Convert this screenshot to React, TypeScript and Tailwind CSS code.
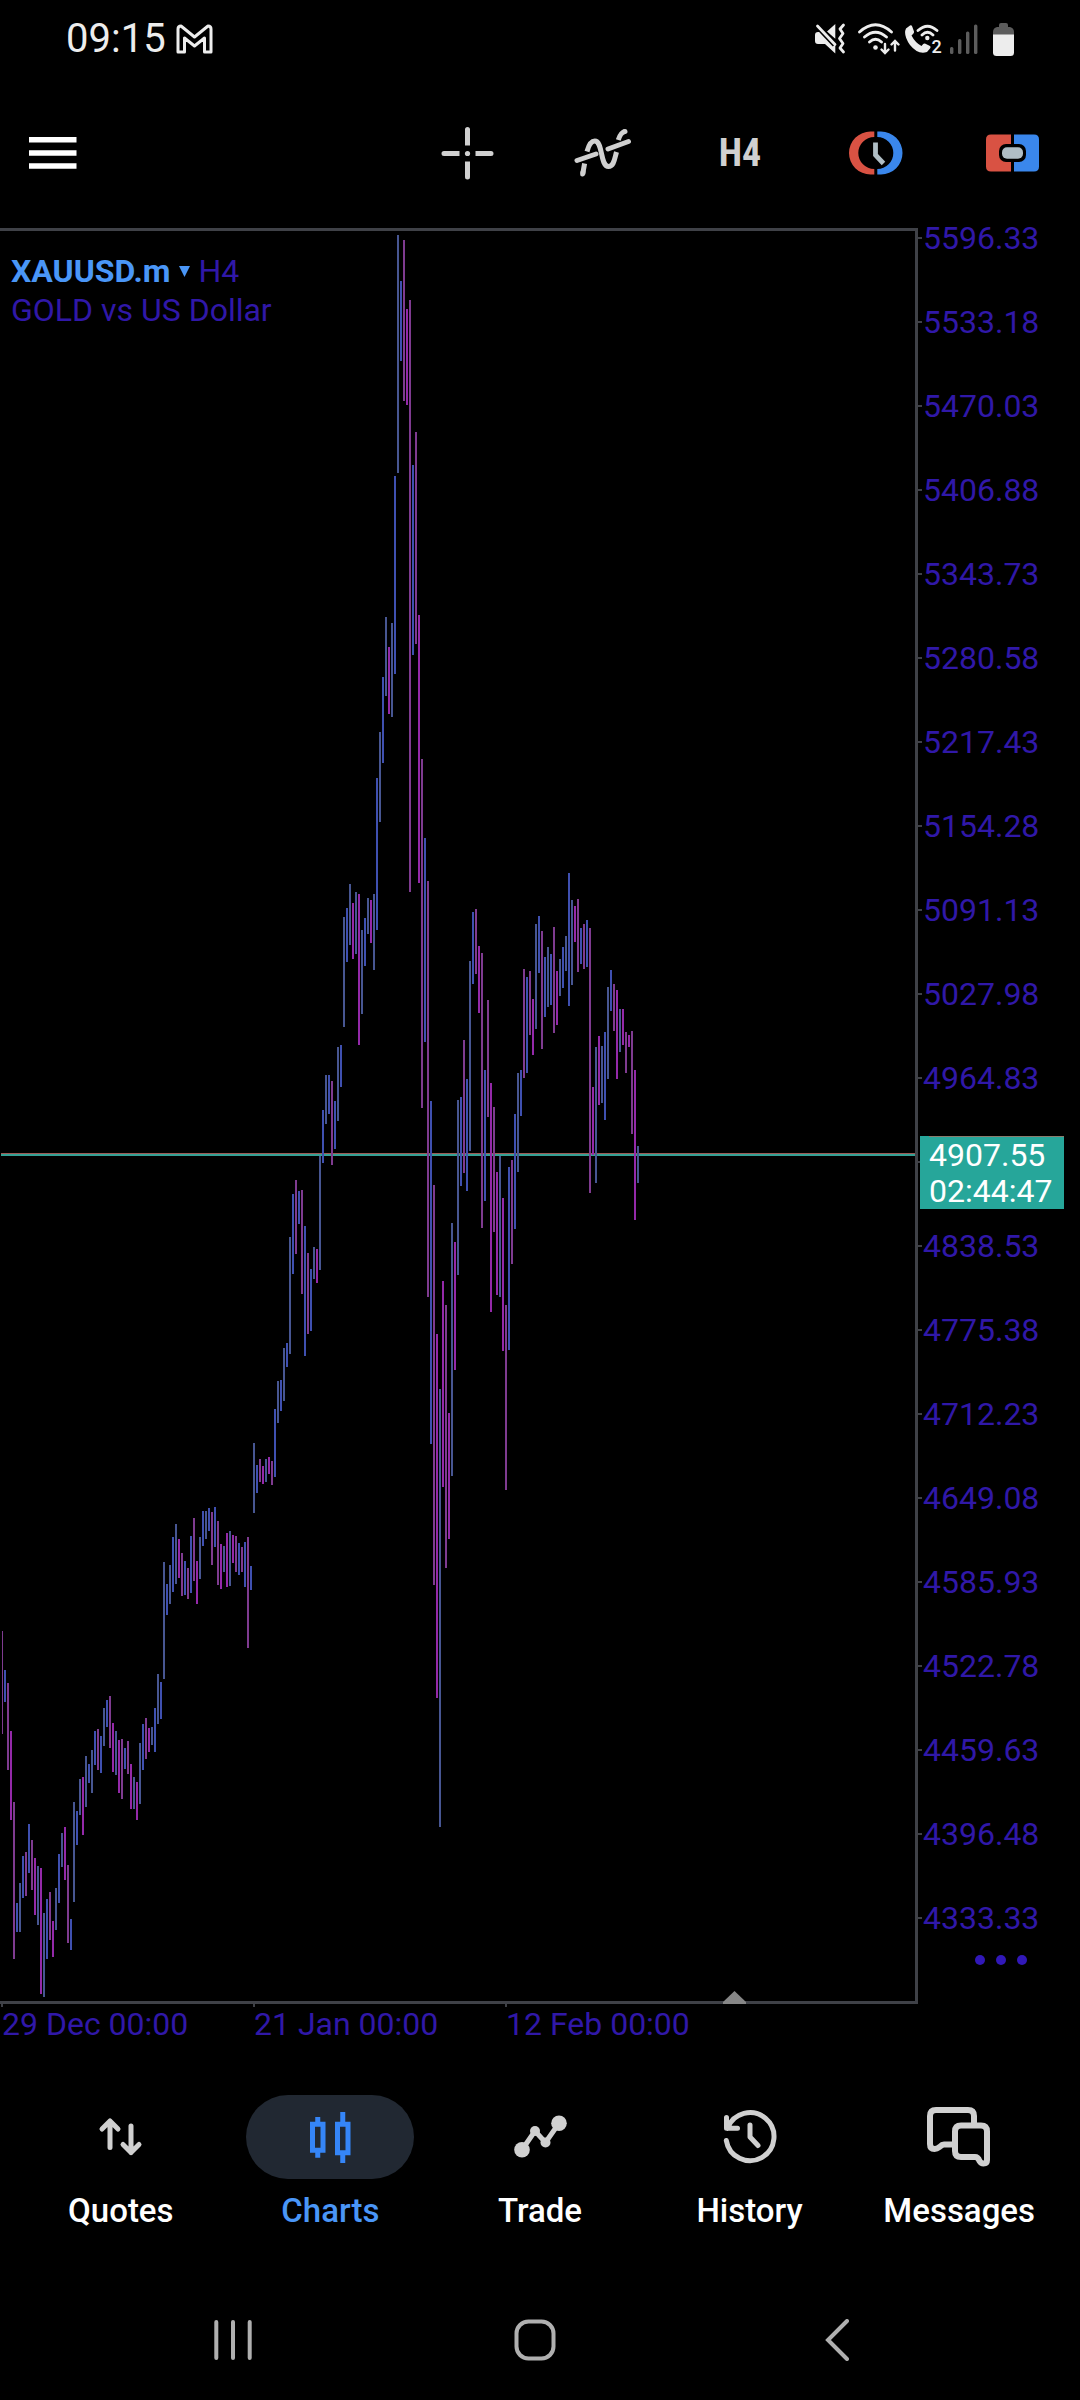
import { useState, type ReactNode } from "react";
import clsx from "clsx";

type Bar = [up: 0 | 1, high: number, low: number];

// one entry per H4 bar, oldest first
const bars: Bar[] = [
    [0, 1631, 1734], [1, 1670, 1702], [0, 1683, 1770], [0, 1731, 1820], [0, 1802, 1959], [1, 1903, 1932],
    [1, 1883, 1932], [1, 1856, 1898], [0, 1852, 1896], [1, 1824, 1873], [0, 1840, 1890], [0, 1858, 1915],
    [1, 1866, 1925], [0, 1868, 1994], [1, 1913, 1997], [1, 1899, 1959], [0, 1892, 1940], [0, 1921, 1957],
    [1, 1888, 1930], [1, 1854, 1903], [1, 1833, 1867], [0, 1827, 1880], [0, 1865, 1943], [1, 1919, 1950],
    [1, 1802, 1902], [1, 1811, 1845], [1, 1779, 1815], [0, 1777, 1835], [1, 1756, 1807], [1, 1764, 1783],
    [1, 1750, 1793], [1, 1731, 1765], [0, 1729, 1770], [1, 1736, 1773], [1, 1708, 1746], [1, 1700, 1727],
    [0, 1696, 1748], [0, 1723, 1772], [1, 1731, 1775], [0, 1740, 1793], [0, 1739, 1799], [1, 1748, 1769],
    [0, 1741, 1774], [0, 1764, 1809], [1, 1777, 1809], [0, 1782, 1820], [1, 1743, 1804], [1, 1724, 1770],
    [0, 1718, 1759], [0, 1728, 1752], [1, 1727, 1745], [1, 1708, 1752], [1, 1674, 1724], [1, 1682, 1719],
    [1, 1562, 1679], [1, 1584, 1615], [1, 1565, 1604], [1, 1537, 1592], [1, 1524, 1584], [0, 1539, 1578],
    [0, 1553, 1596], [1, 1561, 1595], [0, 1568, 1599], [1, 1536, 1593], [0, 1518, 1581], [0, 1561, 1604],
    [1, 1537, 1579], [1, 1511, 1546], [1, 1511, 1539], [1, 1508, 1531], [0, 1512, 1565], [1, 1507, 1547],
    [0, 1521, 1585], [0, 1544, 1589], [1, 1546, 1572], [0, 1533, 1587], [1, 1531, 1586], [0, 1535, 1563],
    [0, 1536, 1572], [1, 1543, 1575], [0, 1547, 1572], [1, 1542, 1587], [0, 1537, 1648], [1, 1566, 1590],
    [1, 1443, 1513], [1, 1465, 1493], [0, 1459, 1482], [0, 1466, 1484], [1, 1459, 1482], [0, 1457, 1474],
    [0, 1461, 1485], [1, 1409, 1477], [1, 1381, 1423], [1, 1380, 1411], [1, 1348, 1401], [1, 1343, 1367],
    [1, 1237, 1354], [1, 1194, 1274], [0, 1180, 1254], [1, 1191, 1224], [0, 1190, 1294], [1, 1226, 1356],
    [0, 1253, 1334], [1, 1269, 1331], [1, 1247, 1279], [0, 1249, 1283], [1, 1156, 1270], [1, 1110, 1163],
    [1, 1075, 1124], [1, 1075, 1114], [0, 1081, 1165], [1, 1101, 1149], [1, 1047, 1121], [1, 1045, 1087],
    [1, 917, 1027], [1, 908, 962], [1, 884, 945], [0, 903, 959], [1, 892, 954], [0, 894, 1045],
    [1, 930, 1014], [1, 918, 966], [1, 898, 934], [0, 900, 943], [1, 894, 970], [1, 778, 930],
    [1, 732, 822], [1, 677, 763], [1, 617, 696], [0, 647, 714], [1, 623, 717], [1, 476, 674],
    [1, 235, 473], [1, 281, 361], [0, 240, 401], [0, 309, 405], [0, 300, 892], [1, 465, 655],
    [0, 432, 644], [0, 615, 883], [0, 759, 1108], [1, 838, 1042], [0, 881, 1297], [1, 1101, 1444],
    [0, 1185, 1585], [0, 1334, 1698], [1, 1389, 1827], [0, 1281, 1487], [0, 1305, 1568], [0, 1413, 1539],
    [1, 1223, 1476], [0, 1242, 1370], [1, 1100, 1275], [1, 1097, 1186], [0, 1040, 1173], [1, 1079, 1191],
    [1, 961, 1151], [1, 912, 984], [0, 909, 974], [0, 946, 1013], [0, 953, 1228], [1, 1070, 1201],
    [0, 1000, 1117], [0, 1083, 1312], [0, 1107, 1232], [0, 1172, 1295], [1, 1156, 1297], [0, 1198, 1351],
    [0, 1305, 1490], [1, 1167, 1350], [0, 1160, 1264], [1, 1114, 1229], [1, 1073, 1172], [1, 1070, 1116],
    [0, 969, 1078], [1, 977, 1073], [0, 971, 1035], [0, 999, 1055], [1, 924, 1029], [1, 916, 973],
    [0, 931, 1049], [1, 957, 1017], [1, 947, 1007], [1, 954, 1005], [0, 927, 1033], [0, 971, 1025],
    [1, 959, 996], [1, 947, 988], [1, 936, 971], [1, 873, 1006], [1, 900, 985], [0, 906, 942],
    [0, 899, 972], [1, 928, 964], [0, 924, 969], [1, 920, 967], [0, 928, 1193], [0, 1087, 1155],
    [1, 1047, 1183], [0, 1036, 1105], [1, 1046, 1103], [1, 1032, 1120], [1, 987, 1079], [1, 970, 1011],
    [0, 984, 1031], [0, 990, 1079], [1, 1009, 1052], [0, 1009, 1045], [0, 1032, 1073], [0, 1035, 1047],
    [0, 1031, 1134], [0, 1070, 1220], [1, 1146, 1183],
];

const currentPrice = 4907.55;
const prices = Array.from({ length: 21 }, (_, i) => 5596.33 - i * 63.15);
const dates = ["29 Dec 00:00", "21 Jan 00:00", "12 Feb 00:00"];

const barColor = (up: number, i: number) => {
    if (up) return i % 2 ? "#3f50b0" : "#475692";
    return i % 2 ? "#9429a9" : "#7f3b90";
};

const StatusBar = () => (
    <div className="flex h-[78px] items-center justify-between px-[66px] text-[#ededed]">
        <div className="flex items-center gap-[10px]">
            <span className="text-[40px] leading-[48px]">09:15</span>
            <svg width="37" height="30" viewBox="0 0 37 30" fill="none" stroke="currentColor" strokeWidth="3" strokeLinejoin="round">
                <path d="M2 5Q2 2 5 2L18.500 13L32 2Q35 2 35 5V28H28.500V14L18.500 22L8.500 14V28H2Z" />
            </svg>
        </div>
        <div className="flex items-center">
            <svg width="43" height="33" viewBox="0 0 43 33" fill="currentColor">
                <path d="M12 8.500L20.300 1V15.800ZM0 12Q0 9 3 9H7L20.300 22.500V30.500L10 21H3Q0 21 0 18Z" />
                <path d="M2.500 3L20 21.500" stroke="#000" strokeWidth="6" />
                <path d="M2.500 3L20 21.500M28.500 2L25 6L28 10.500L24.500 15.500L28 20.500L25 25L28.500 29" fill="none" stroke="currentColor" strokeWidth="2.800" strokeLinecap="round" strokeLinejoin="round" />
            </svg>
            <svg width="46" height="33" viewBox="0 0 46 33" fill="none" stroke="currentColor" strokeWidth="2.800" strokeLinecap="round">
                <path d="M1.500 9Q17.500 -5.500 33.500 9M6.500 14Q17.500 4.500 28.500 14M11.500 19Q17.500 13.500 23.500 19" />
                <circle cx="17.500" cy="24.500" r="2.300" fill="currentColor" stroke="none" />
                <path d="M27 21V29.500M23.500 26.500L27 30L30.500 26.500M37 27.500V19M33.500 21.500L37 18L40.500 21.500" strokeWidth="2.400" />
            </svg>
            <svg width="46" height="33" viewBox="0 0 46 33" fill="currentColor">
                <path d="M2 5.500L6 2.500Q7.500 1.800 8.200 3.500L10 8.500Q10.300 9.800 9 11L7.500 12.500Q11 19.500 17.500 23L19 21.200Q20 20.300 21.500 20.800L26 23Q27 24 26 25.500L23 29Q14 32 6 22Q-1 12 2 5.500Z" />
                <path d="M14 7.500Q23.500 -1 33 7.500M18 12Q23.500 6.500 29 12" fill="none" stroke="currentColor" strokeWidth="2.800" strokeLinecap="round" />
                <circle cx="23.300" cy="15" r="2.200" />
                <text x="27.500" y="30" fontSize="18" fontWeight="500">2</text>
            </svg>
            <svg width="43" height="33" viewBox="0 0 43 33" fill="#5c5c5c">
                <rect x="0" y="24" width="3.400" height="7" rx="1.500" />
                <rect x="8" y="16" width="3.400" height="15" rx="1.500" />
                <rect x="16" y="8.500" width="3.400" height="22.500" rx="1.500" />
                <rect x="24" y="1.500" width="3.400" height="29.500" rx="1.500" />
            </svg>
            <svg width="21" height="33" viewBox="0 0 21 33">
                <path d="M6 4V2Q6 0 8 0H13Q15 0 15 2V4H17Q21 5 21 9V12H0V9Q0 5 4 4Z" fill="#5c5c5c" />
                <path d="M0 11.500H21V29.500Q21 33 17.500 33H3.500Q0 33 0 29.500Z" fill="currentColor" />
            </svg>
        </div>
    </div>
);

const ToolButton = ({ label, children }: { label: string; children: ReactNode }) => (
    <button aria-label={label} className="flex h-full w-[136px] items-center justify-center text-[#d0d0d0]">
        {children}
    </button>
);

const Toolbar = () => (
    <header className="flex h-[150px] items-center">
        <button aria-label="Menu" className="flex h-full items-center px-[29px] text-white">
            <svg width="48" height="32" viewBox="0 0 48 32" fill="currentColor">
                <path d="M0 0h47.500v5.500H0zM0 13.200h47.500v5.500H0zM0 26.200h47.500v5.500H0z" />
            </svg>
        </button>
        <div className="ml-auto flex h-full">
            <ToolButton label="Crosshair">
                <svg width="54" height="54" viewBox="0 0 54 54" fill="none" stroke="currentColor" strokeWidth="5">
                    <path d="M3 27.500H18.500M34.500 27.500H50M26.500 3.500V19.500M26.500 35.500V51" strokeLinecap="butt" />
                    <path d="M3 27.500H5M48 27.500H50M26.500 3.500V5M26.500 50V51" strokeLinecap="round" />
                    <circle cx="26.500" cy="27.500" r="2.600" fill="currentColor" stroke="none" />
                </svg>
            </ToolButton>
            <ToolButton label="Indicators">
                <svg width="60" height="52" viewBox="0 0 60 52" fill="none" stroke="currentColor" strokeWidth="5">
                    <path d="M3 33.500L22 27M34 22L54.500 14.500" strokeLinecap="round" />
                    <path d="M8.700 47L9 45M51 4.500L50.500 4.600" strokeLinecap="round" />
                    <path d="M8.700 47L10.600 36.500M44.300 13Q46.500 5.500 51 4.400" />
                    <path d="M13 24.500C15 17 17.500 14 20.800 14C29 14 26 39.500 34.500 39.500C40 39.500 40.500 32 42.500 25" />
                </svg>
            </ToolButton>
            <button className="h-full w-[136px] font-['Roboto_Condensed','Liberation_Sans_Narrow',sans-serif] text-[38px] font-bold text-[#d0d0d0]">
                H4
            </button>
            <ToolButton label="Trading sessions">
                <svg width="54" height="44" viewBox="0 0 54 44">
                    <path d="M25.300 .500H21.500A21.500 21.500 0 0 0 21.500 43.500H25.300V38A16 16 0 0 1 25.300 6Z" fill="#d95243" />
                    <path d="M28.300 .500H32A21.500 21.500 0 0 1 32 43.500H28.300V38A16 16 0 0 0 28.300 6Z" fill="#3a87ec" />
                    <path d="M26.500 11.500V24L34.500 32.500" fill="none" stroke="#b0bec5" strokeWidth="4.800" />
                </svg>
            </ToolButton>
            <ToolButton label="One click trading">
                <svg width="53" height="38" viewBox="0 0 53 38">
                    <path d="M25 .500H5Q0 .500 0 5.500V32.500Q0 37.500 5 37.500H25Z" fill="#d95243" />
                    <path d="M28 .500H48Q53 .500 53 5.500V32.500Q53 37.500 48 37.500H28Z" fill="#3a87ec" />
                    <rect x="13" y="10" width="27" height="18" rx="7" />
                    <rect x="16" y="13.300" width="21" height="11.500" rx="5" fill="#b0bec5" />
                </svg>
            </ToolButton>
        </div>
    </header>
);

const Plot = () => (
    <div className="relative flex flex-1 border-t-[3px] border-r-[3px] border-b-[3px] border-[#3f4147]">
        <svg className="w-full flex-1" viewBox="0 231 915 1770" preserveAspectRatio="none" shapeRendering="crispEdges">
            <rect x="1" y="1153" width="914" height="1" fill="#9c5a55" />
            <rect x="1" y="1154" width="914" height="2" fill="#35a094" />
            {bars.map(([up, high, low], i) => (
                <rect key={i} x={i ? 3 * i + 1 : 2} y={high} width={i ? 2 : 1} height={low - high} fill={barColor(up, i)} />
            ))}
        </svg>
        <div className="absolute top-[21px] left-[11px] text-[32px] leading-[39px]">
            <div className="flex items-center gap-2">
                <button className="flex items-center gap-[9px] font-bold text-[#4a96f7]">
                    XAUUSD.m
                    <svg width="11" height="11" viewBox="0 0 11 11" fill="currentColor"><path d="M0 0H11L5.500 11Z" /></svg>
                </button>
                <span>H4</span>
            </div>
            <div>GOLD vs US Dollar</div>
        </div>
        <svg className="absolute right-[169px] -bottom-[3px]" width="23" height="13" viewBox="0 0 23 13" fill="#868686">
            <path d="M11.500 0L23 11V13H0V11Z" />
        </svg>
    </div>
);

const PriceAxis = () => (
    <div className="relative w-[162px]">
        <ul className="flex flex-col gap-16 text-[32px] leading-5">
            {prices.map((price) => (
                <li key={price} className="flex h-5 items-center gap-px">
                    <span className="h-[2px] w-1 bg-[#3f4147]" />
                    {/* the current price tag takes the place of the nearest label */}
                    {Math.abs(price - currentPrice) > 20 && price.toFixed(2)}
                </li>
            ))}
        </ul>
        <div className="absolute top-[908px] left-[2px] w-36 bg-[#26a69a] pl-[9px] text-[32px] leading-9 text-white">
            <div className="h-px w-[135px] bg-[#8a7d6e]" />
            <div>{currentPrice}</div>
            <div>02:44:47</div>
        </div>
        <button aria-label="More" className="mt-[27px] ml-[57px] flex gap-[11px]">
            <span className="size-[10px] rounded-full bg-[#3118b8]" />
            <span className="size-[10px] rounded-full bg-[#3118b8]" />
            <span className="size-[10px] rounded-full bg-[#3118b8]" />
        </button>
    </div>
);

const TimeAxis = () => (
    <div className="flex h-[46px] pl-px text-[32px] leading-[34px]">
        {dates.map((date) => (
            <div key={date} className="w-[252px]">
                <div className="h-[3px] w-[2px] bg-[#3f4147]" />
                <div className="pl-px">{date}</div>
            </div>
        ))}
    </div>
);

const tabs = [
    {
        name: "Quotes",
        icon: (
            <svg width="48" height="48" viewBox="0 0 48 48" fill="none" stroke="currentColor" strokeWidth="5" strokeLinecap="round" strokeLinejoin="round">
                <path d="M13 8V34.500M5 16L13 8L21 16M34 13V39.500M26 31.500L34 39.500L42 31.500" />
            </svg>
        ),
    },
    {
        name: "Charts",
        icon: (
            <svg width="48" height="56" viewBox="0 0 48 56" fill="none" stroke="#3585f7" strokeWidth="5">
                <path d="M6.500 15.300h10.500v26H6.500zM31.500 15.300h10.500v28.500H31.500zM11.750 8v6M11.750 43v5.700M36.750 3v11M36.750 45v9" />
            </svg>
        ),
    },
    {
        name: "Trade",
        icon: (
            <svg width="56" height="56" viewBox="0 0 56 56" fill="currentColor">
                <path d="M10 40.700L23 22L33.500 33.500L47 14.300" fill="none" stroke="currentColor" strokeWidth="5" />
                <circle cx="10" cy="40.700" r="7.800" />
                <circle cx="23" cy="22" r="5" />
                <circle cx="33.500" cy="33.500" r="5" />
                <circle cx="47" cy="14.300" r="7.800" />
            </svg>
        ),
    },
    {
        name: "History",
        icon: (
            <svg width="56" height="56" viewBox="0 0 56 56" fill="none" stroke="currentColor" strokeWidth="5" strokeLinecap="round" strokeLinejoin="round">
                <path d="M4.300 31.500A24 24 0 1 0 5.500 19.300M4.500 8.500V19.300H15.500M28 16V28L36 36.500" />
            </svg>
        ),
    },
    {
        name: "Messages",
        icon: (
            <svg width="64" height="64" viewBox="0 0 64 64" fill="none" stroke="currentColor" strokeWidth="6" strokeLinejoin="round">
                <path d="M27 39.500H17Q15 39.500 12.500 42Q10 44 7.500 44Q3 44 3 39V11Q3 5 9 5H41Q47 5 47 11V20" />
                <path d="M34 20.500H54Q60 20.500 60 26.500V55Q60 58.500 56.500 58.500Q54 58.500 52.500 56Q51 52 48 52H34Q28 52 28 46V26.500Q28 20.500 34 20.500Z" />
            </svg>
        ),
    },
];

const TabBar = () => {
    const [active, setActive] = useState("Charts");

    return (
        <nav className="grid grid-cols-5 px-4 pt-[45px] pb-[49px]">
            {tabs.map(({ name, icon }) => (
                <button key={name} onClick={() => setActive(name)} className="flex flex-col items-center gap-3">
                    <span
                        className={clsx(
                            "flex h-[84px] w-[168px] items-center justify-center rounded-full text-[#d0d0d0]",
                            active === name && "bg-[#212832]"
                        )}
                    >
                        {icon}
                    </span>
                    <span className={clsx("text-[33px] leading-10 font-medium", active === name ? "text-[#4a96f7]" : "text-white")}>
                        {name}
                    </span>
                </button>
            ))}
        </nav>
    );
};

const SystemNav = () => (
    <div className="grid h-[120px] grid-cols-3 pr-[92px] pl-[82px] text-[#b0b0b0]">
        <button aria-label="Recents" className="flex items-center justify-center">
            <svg width="38" height="42" viewBox="0 0 38 42" fill="none" stroke="currentColor" strokeWidth="4" strokeLinecap="round">
                <path d="M2.300 3V39M19 3V39M35.700 3V39" />
            </svg>
        </button>
        <button aria-label="Home" className="flex items-center justify-center">
            <svg width="42" height="42" viewBox="0 0 42 42" fill="none" stroke="currentColor" strokeWidth="4">
                <rect x="2.500" y="2.500" width="37" height="37" rx="12" />
            </svg>
        </button>
        <button aria-label="Back" className="flex items-center justify-center">
            <svg width="24" height="42" viewBox="0 0 24 42" fill="none" stroke="currentColor" strokeWidth="4" strokeLinecap="round">
                <path d="M22 2L3 21L22 40" />
            </svg>
        </button>
    </div>
);

const App = () => {
    return (
        <div className="flex min-h-screen flex-col bg-black font-[Roboto,sans-serif] text-[#3018a8]">
            <StatusBar />
            <Toolbar />
            <main className="flex flex-1 flex-col">
                <div className="flex flex-1">
                    <Plot />
                    <PriceAxis />
                </div>
                <TimeAxis />
            </main>
            <TabBar />
            <SystemNav />
        </div>
    );
};

export default App;
